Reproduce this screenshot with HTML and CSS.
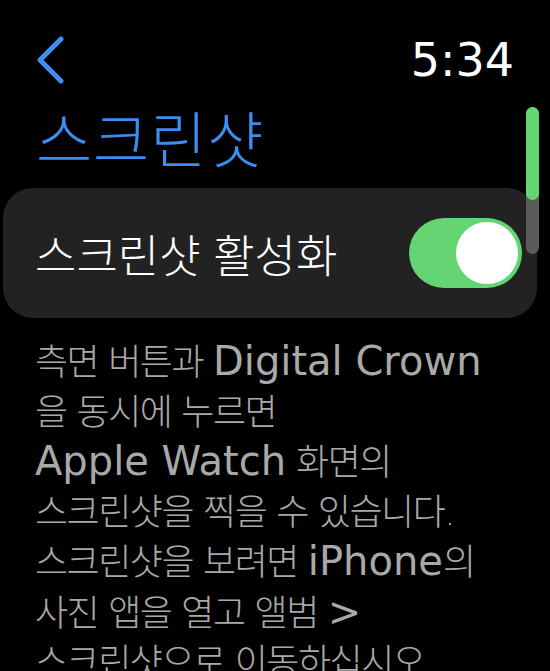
FILE: index.html
```html
<!DOCTYPE html>
<html lang="ko">

<head>
    <meta charset="UTF-8">
    <title>스크린샷</title>
    <link rel="stylesheet" href="styles.css">
</head>

<body>
    <div class="screen">
        <div class="top-bar">
            <svg class="back" width="30" height="48" viewBox="0 0 30 48">
                <path d="M25 3 L4 24 L25 45" fill="none" stroke="#3d8ef3" stroke-width="5" stroke-linecap="round" stroke-linejoin="round" />
            </svg>
            <span class="time">5:34</span>
        </div>

        <h1 class="title">스크린샷</h1>

        <div class="card">
            <span class="card-label">스크린샷 활성화</span>
            <div class="toggle">
                <div class="knob"></div>
            </div>
        </div>

        <p class="desc">측면 버튼과 <span class="en">Digital Crown</span><br>을 동시에 누르면<br><span class="en">Apple Watch</span> 화면의<br>스크린샷을 찍을 수 있습니다.<br>스크린샷을 보려면 <span class="en">iPhone</span>의<br>사진 앱을 열고 앨범 <span class="en">&gt;</span><br>스크린샷으로 이동하십시오.</p>

        <div class="scrollbar">
            <div class="thumb"></div>
        </div>
    </div>
</body>

</html>
```

FILE: styles.css
```css
body {
    margin: 0;
    padding: 0;
    background-color: #000;
    font-family: "DejaVu Sans", "Noto Sans CJK KR", sans-serif;
    color: #fff;
}

.screen {
    position: relative;
    width: 550px;
    height: 671px;
    overflow: hidden;
}

.top-bar {
    display: flex;
    justify-content: space-between;
    align-items: center;
    padding: 36px 36px 0 36px;
    height: 48px;
}

.back {
    display: block;
}

.time {
    font-size: 46px;
    line-height: 48px;
    color: #fff;
}

.title {
    margin: 20px 0 0 36px;
    font-family: "Noto Sans CJK KR", sans-serif;
    font-weight: 300;
    font-size: 61px;
    line-height: 66px;
    letter-spacing: 1px;
    color: #3d8ef3;
}

.card {
    display: flex;
    align-items: center;
    justify-content: space-between;
    margin: 18px 13px 0 3px;
    height: 130px;
    padding: 0 15px 0 32px;
    background-color: #222;
    border-radius: 30px;
}

.card-label {
    font-family: "Noto Sans CJK KR", sans-serif;
    font-weight: 300;
    font-size: 45px;
    letter-spacing: 0;
    color: #fff;
}

.toggle {
    display: flex;
    align-items: center;
    justify-content: flex-end;
    width: 113px;
    height: 70px;
    padding: 0 4px;
    box-sizing: border-box;
    background-color: #64d572;
    border-radius: 35px;
}

.knob {
    width: 62px;
    height: 62px;
    background-color: #fff;
    border-radius: 50%;
}

.desc {
    margin: 19px 0 0 35px;
    font-size: 36px;
    font-weight: 300;
    line-height: 49.5px;
    letter-spacing: -1.5px;
    color: #a9a9a9;
    white-space: nowrap;
}

.desc .en {
    font-size: 40px;
    font-weight: normal;
    letter-spacing: 0;
}

.scrollbar {
    position: absolute;
    left: 526px;
    top: 107px;
    width: 13px;
    height: 147px;
    background-color: #5b5b5b;
    border-radius: 7px;
}

.thumb {
    height: 93px;
    background-color: #64d572;
    border-radius: 7px;
}
```
